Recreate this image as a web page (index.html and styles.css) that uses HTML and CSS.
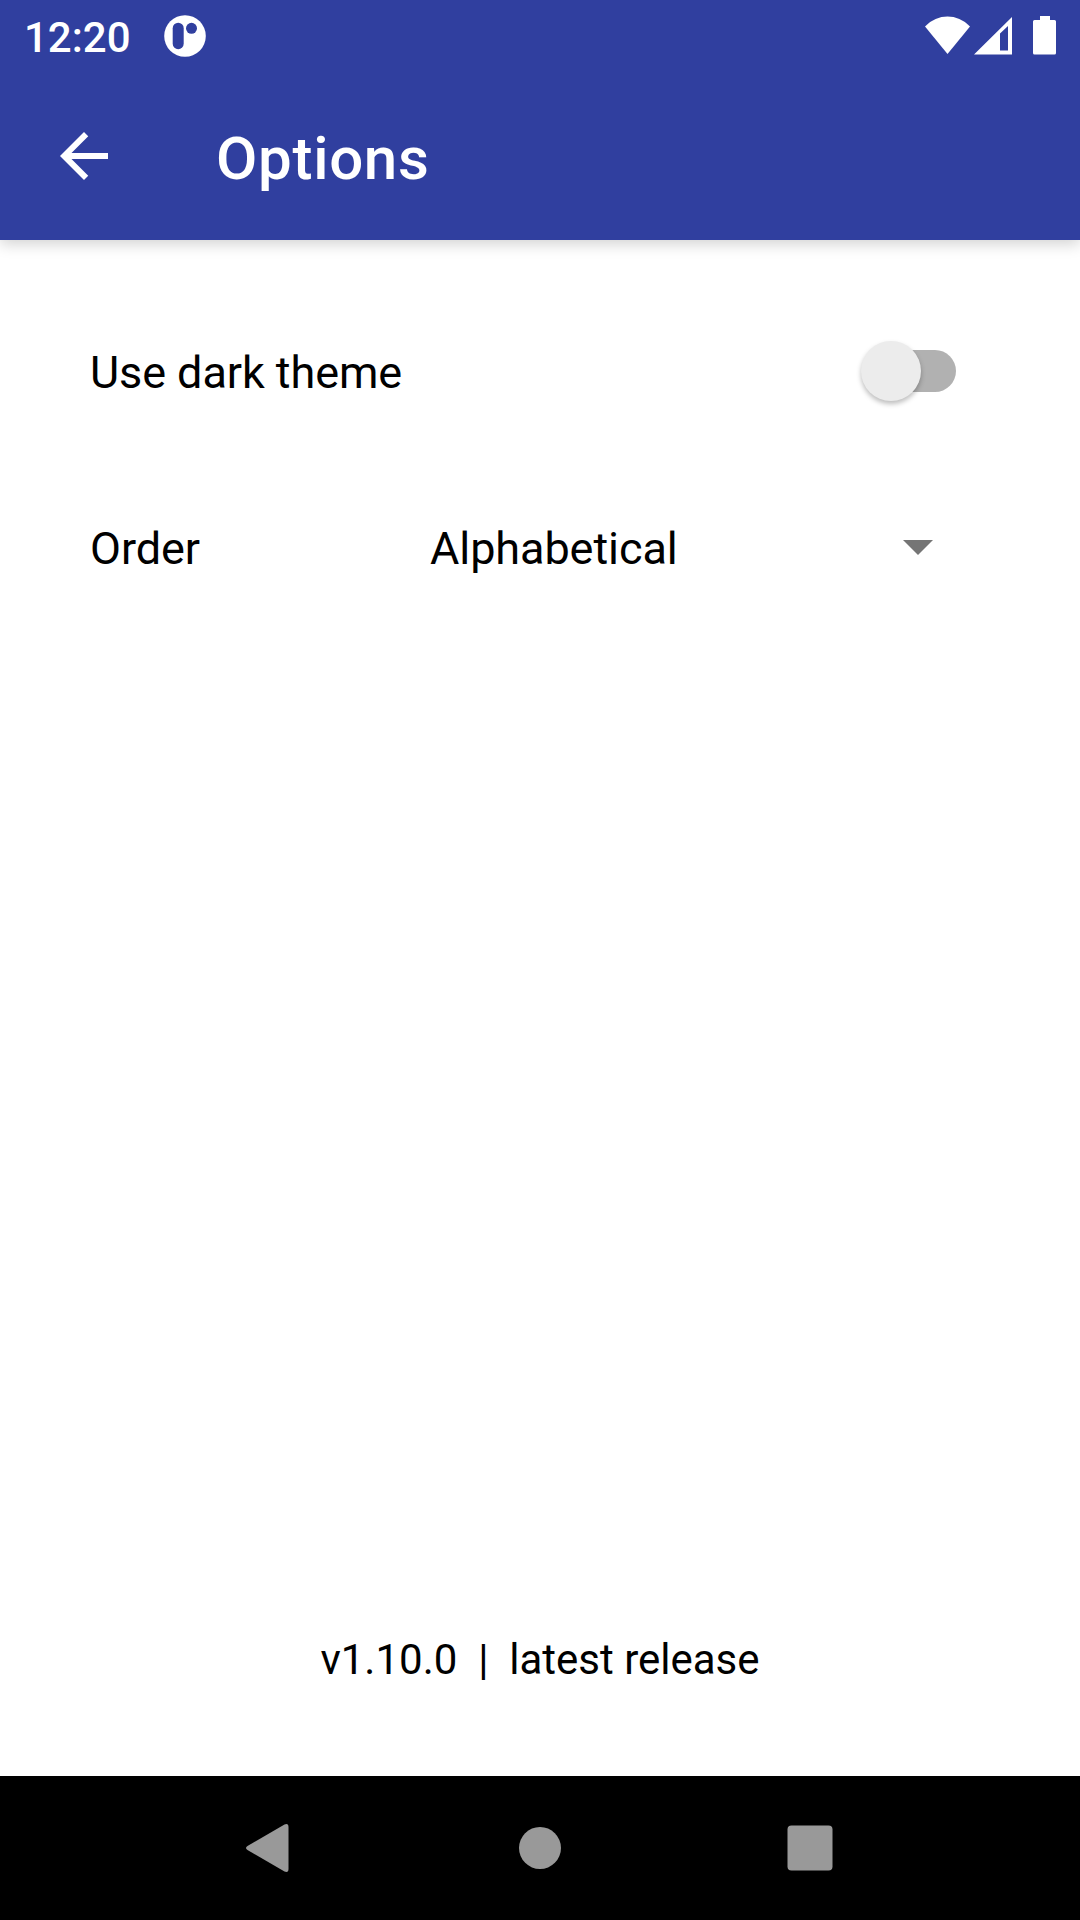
FILE: index.html
```html
<!DOCTYPE html>
<html lang="en">
<head>
<meta charset="utf-8">
<title>Options</title>
<link rel="stylesheet" href="styles.css">
</head>
<body>
<header class="header">
  <div class="status">
    <span class="time">12:20</span>
    <svg class="app-icon" width="42" height="42" viewBox="0 0 42 42">
      <circle cx="21" cy="21" r="20.800" fill="#fff"/>
      <rect class="cutout" x="8.7" y="7.7" width="11" height="26.500" rx="5.5"/>
      <circle class="cutout" cx="27.5" cy="13.3" r="5.500"/>
    </svg>
    <svg class="system-icons" width="132" height="40" viewBox="0 0 132 40" fill="#fff">
      <path d="M0 10.500C13-2.800 32-2.800 45 10.500L22.500 38Z"/>
      <path fill-rule="evenodd" d="M49 38.500L87 1V38.500ZM75 17.500V34.500H83V10Z"/>
      <path d="M115 0h10v4h4.500q1.500 0 1.500 1.500v31.500q0 1.500-1.500 1.500h-20q-1.500 0-1.500-1.500v-31.500q0-1.500 1.500-1.500h5.500z"/>
    </svg>
  </div>
  <div class="toolbar">
    <svg width="72" height="72" viewBox="0 0 24 24" fill="#fff"><path d="M20 11H7.830l5.590-5.590L12 4l-8 8 8 8 1.410-1.410L7.830 13H20v-2z"/></svg>
    <h1 class="title">Options</h1>
  </div>
</header>
<main class="content">
  <div class="row">
    <span class="label">Use dark theme</span>
    <div class="switch"><div class="thumb"></div></div>
  </div>
  <div class="row">
    <span class="label order">Order</span>
    <span class="value">Alphabetical</span>
    <svg class="caret" width="30" height="15" viewBox="0 0 30 15"><path d="M0 0H30L15 15Z" fill="#757575"/></svg>
  </div>
  <footer class="version">v1.10.0&nbsp; |&nbsp; latest release</footer>
</main>
<nav class="navbar">
  <svg width="72" height="72" viewBox="0 0 72 72"><path d="M54.500 15V57Q54.500 61 50.500 59.500L13.500 38Q10.500 36 13.500 34L50.500 12.500Q54.500 11 54.500 15Z"/></svg>
  <svg width="72" height="72" viewBox="0 0 72 72"><circle cx="36" cy="36" r="21"/></svg>
  <svg width="72" height="72" viewBox="0 0 72 72"><rect x="13.500" y="13.500" width="45" height="45" rx="4"/></svg>
</nav>
</body>
</html>
```
FILE: styles.css
```css
* { box-sizing: border-box; }
body {
  margin: 0;
  height: 1920px;
  display: flex;
  flex-direction: column;
  background: #fff;
  color: #000;
  font-family: Roboto, sans-serif;
  overflow: hidden;
}
svg { display: block; flex: none; }
.header {
  height: 240px;
  background: #303f9f;
  color: #fff;
  box-shadow: 0 4px 14px rgba(0, 0, 0, .18);
}
.status {
  height: 72px;
  display: flex;
  align-items: center;
  padding: 0 24px;
}
.time {
  width: 140px;
  padding-top: 3px;
  font-size: 42px;
  font-weight: 500;
  line-height: 48px;
}
.cutout { fill: #303f9f; }
.system-icons { margin-left: auto; margin-right: -1px; }
.toolbar {
  height: 168px;
  display: flex;
  align-items: flex-start;
  padding: 48px 48px 0;
  gap: 96px;
}
.title {
  margin: 3px 0 0;
  font-size: 60px;
  font-weight: 500;
  line-height: 72px;
  letter-spacing: .7px;
}
.content {
  height: 1536px;
  display: flex;
  flex-direction: column;
  padding: 45px 90px 0;
}
.row {
  height: 176px;
  display: flex;
  align-items: center;
  font-size: 45px;
  line-height: 54px;
  letter-spacing: -.08px;
}
.order { width: 340px; }
.switch {
  width: 88px;
  height: 42px;
  margin-left: auto;
  margin-right: 34px;
  margin-top: -4px;
  border-radius: 21px;
  background: #b1b1b1;
  display: flex;
  align-items: center;
}
.thumb {
  flex: none;
  width: 60px;
  height: 60px;
  margin-left: -7px;
  border-radius: 50%;
  background: #ececec;
  box-shadow: 0 3px 5px rgba(0, 0, 0, .26);
}
.caret { margin-left: auto; margin-right: 57px; margin-top: -3px; }
.version {
  margin-top: auto;
  padding-bottom: 92px;
  text-align: center;
  font-size: 42px;
  line-height: 48px;
}
.navbar {
  height: 144px;
  display: flex;
  justify-content: center;
  align-items: center;
  gap: 198px;
  background: #000;
  fill: #999;
}
```
